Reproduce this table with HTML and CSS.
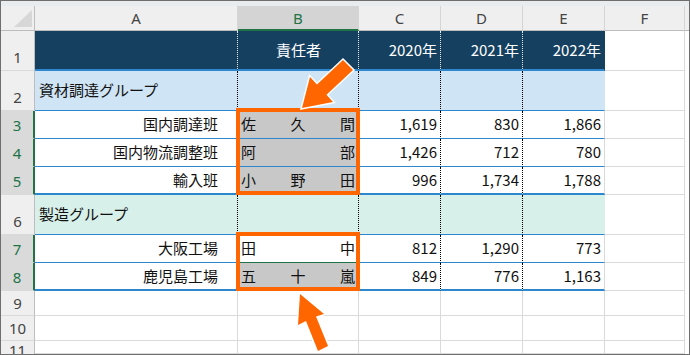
FILE: index.html
```html
<!DOCTYPE html>
<html lang="ja">
<head>
<meta charset="utf-8">
<title>Sheet</title>
<link rel="stylesheet" href="styles.css">
</head>
<body>
<div class="sheet">
  <div class="strip"></div>
  <div class="grid">
    <!-- column headers -->
    <div class="ch corner"><svg class="tri" width="33" height="24" viewBox="0 0 33 24"><polygon points="13,21 31,21 31,4" fill="#d7d7d7"/></svg></div>
    <div class="ch">A</div>
    <div class="ch sel">B</div>
    <div class="ch">C</div>
    <div class="ch">D</div>
    <div class="ch">E</div>
    <div class="ch">F</div>
    <div class="ch pad"></div>

    <!-- row 1 -->
    <div class="rh"><span>1</span></div>
    <div class="c r1"></div>
    <div class="c r1 ctr">責任者</div>
    <div class="c r1 num">2020年</div>
    <div class="c r1 num">2021年</div>
    <div class="c r1 e num">2022年</div>
    <div class="f"></div>
    <div class="pad"></div>

    <!-- row 2 -->
    <div class="rh"><span>2</span></div>
    <div class="c g2">資材調達グループ</div>
    <div class="c g2"></div>
    <div class="c g2"></div>
    <div class="c g2"></div>
    <div class="c g2 e"></div>
    <div class="f"></div>
    <div class="pad"></div>

    <!-- row 3 -->
    <div class="rh sel"><span>3</span></div>
    <div class="c ain">国内調達班</div>
    <div class="c nm gy"><span>佐</span><span>久</span><span>間</span></div>
    <div class="c num">1,619</div>
    <div class="c num">830</div>
    <div class="c num e">1,866</div>
    <div class="f"></div>
    <div class="pad"></div>

    <!-- row 4 -->
    <div class="rh sel"><span>4</span></div>
    <div class="c ain">国内物流調整班</div>
    <div class="c nm gy"><span>阿</span><span>部</span></div>
    <div class="c num">1,426</div>
    <div class="c num">712</div>
    <div class="c num e">780</div>
    <div class="f"></div>
    <div class="pad"></div>

    <!-- row 5 -->
    <div class="rh sel"><span>5</span></div>
    <div class="c ain thick">輸入班</div>
    <div class="c nm gy thick"><span>小</span><span>野</span><span>田</span></div>
    <div class="c num thick">996</div>
    <div class="c num thick">1,734</div>
    <div class="c num e thick">1,788</div>
    <div class="f"></div>
    <div class="pad"></div>

    <!-- row 6 -->
    <div class="rh"><span>6</span></div>
    <div class="c g6">製造グループ</div>
    <div class="c g6"></div>
    <div class="c g6"></div>
    <div class="c g6"></div>
    <div class="c g6 e"></div>
    <div class="f"></div>
    <div class="pad"></div>

    <!-- row 7 -->
    <div class="rh sel"><span>7</span></div>
    <div class="c ain">大阪工場</div>
    <div class="c nm act"><span>田</span><span>中</span></div>
    <div class="c num">812</div>
    <div class="c num">1,290</div>
    <div class="c num e">773</div>
    <div class="f"></div>
    <div class="pad"></div>

    <!-- row 8 -->
    <div class="rh sel"><span>8</span></div>
    <div class="c ain thick">鹿児島工場</div>
    <div class="c nm gy thick"><span>五</span><span>十</span><span>嵐</span></div>
    <div class="c num thick">849</div>
    <div class="c num thick">776</div>
    <div class="c num e thick">1,163</div>
    <div class="f"></div>
    <div class="pad"></div>

    <!-- row 9 -->
    <div class="rh mid"><span>9</span></div>
    <div class="f"></div>
    <div class="f"></div>
    <div class="f"></div>
    <div class="f"></div>
    <div class="f"></div>
    <div class="f"></div>
    <div class="pad"></div>

    <!-- row 10 -->
    <div class="rh mid"><span>10</span></div>
    <div class="f"></div>
    <div class="f"></div>
    <div class="f"></div>
    <div class="f"></div>
    <div class="f"></div>
    <div class="f"></div>
    <div class="pad"></div>

    <!-- row 11 -->
    <div class="rh last"><span>11</span></div>
    <div class="f"></div>
    <div class="f"></div>
    <div class="f"></div>
    <div class="f"></div>
    <div class="f"></div>
    <div class="f"></div>
    <div class="pad"></div>
  </div>

  <div class="hl hl1"></div>
  <div class="hl hl2"></div>

  <svg class="arrows" width="688" height="353" viewBox="1 1 688 353">
    <polygon class="arr" points="302,108 310,77 317,84.5 343,60 353,70 326.5,94.7 333,102"/>
    <polygon class="arr" points="300,294 298,325 306,321 318,351 328,346 316,316.6 324,314"/>
  </svg>
</div>
</body>
</html>
```

FILE: styles.css
```css
html, body {
  margin: 0;
  padding: 0;
  background: #fff;
}

.sheet {
  position: relative;
  width: 690px;
  height: 355px;
  box-sizing: border-box;
  border: 1px solid #6e6e6e;
  overflow: hidden;
  background: #fff;
  font-family: "Noto Sans CJK JP", "Noto Sans", sans-serif;
}

.strip {
  height: 5px;
  background: #e9ecef;
}

.grid {
  display: grid;
  grid-template-columns: 34px 203px 121px 82px 82px 82px 80px 4px;
  grid-template-rows: 25px 40px 40px 28px 28px 28px 40px 28px 28px 25px 25px 13px;
}

.grid > div {
  box-sizing: border-box;
  min-width: 0;
}

/* column headers */
.ch {
  background: #efefef;
  border-right: 1px solid #d5d5d5;
  border-bottom: 1px solid #bcbcbc;
  display: flex;
  align-items: center;
  justify-content: center;
  font-family: "Noto Sans", sans-serif;
  font-size: 15px;
  color: #444;
}
.ch.sel {
  background: #d4d4d4;
  border-bottom: 2px solid #217346;
  color: #217346;
}
.ch.pad {
  border-right: none;
}
.corner {
  position: relative;
  border-right-color: #bdbdbd;
}
.tri {
  position: absolute;
  left: 0;
  top: 0;
}

/* row headers */
.rh {
  background: #efefef;
  border-right: 1px solid #bdbdbd;
  border-bottom: 1px solid #dadada;
  display: flex;
  flex-direction: column;
  justify-content: flex-end;
  align-items: center;
  padding-bottom: 3px;
  font-family: "Noto Sans", sans-serif;
  font-size: 15px;
  color: #444;
}
.rh span {
  display: block;
  line-height: 20px;
  color: #444;
}
.rh.sel {
  background: #dadada;
  border-right: 2px solid #217346;
}
.rh.sel span {
  color: #217346;
}
.rh.mid {
  justify-content: center;
  padding-bottom: 1px;
}
.rh.last {
  justify-content: flex-start;
  padding-bottom: 0;
  border-bottom: none;
}
.rh.last span {
  line-height: 19px;
}

/* data cells */
.c {
  display: flex;
  align-items: center;
  padding: 0 3px 2px 4px;
  font-size: 15px;
  color: #111;
  white-space: nowrap;
  border-right: 1px dotted #000;
  border-bottom: 1px solid #2d87cf;
}
.c.e {
  border-right: 1px solid #d9d9d9;
}
.r1 {
  background: #15405f;
  color: #fff;
  border-bottom-width: 2px;
  border-right-color: #e8e8e8;
}
.r1.e {
  border-right-color: #15405f;
}
.g2 {
  background: #cfe4f5;
}
.g2.e {
  border-right-color: #cfe4f5;
}
.g6 {
  background: #d8f0ea;
}
.g6.e {
  border-right-color: #d8f0ea;
}
.thick {
  border-bottom-width: 2px;
}
.num {
  justify-content: flex-end;
}
.ctr {
  justify-content: center;
}
.ain {
  justify-content: flex-end;
  padding-right: 19px;
}
.nm {
  justify-content: space-between;
  padding: 0 3px 2px 3px;
}
.gy {
  background: #c8c8c8;
}
.act {
  border-bottom-color: #217346;
}

/* empty grid cells */
.f {
  border-right: 1px solid #dadada;
  border-bottom: 1px solid #dadada;
}

/* highlight overlays */
.hl {
  position: absolute;
  box-sizing: border-box;
  border: 4px solid #ff6600;
  left: 235px;
  width: 124px;
}
.hl1 {
  top: 107px;
  height: 87px;
}
.hl2 {
  top: 231px;
  height: 59px;
}

.arrows {
  position: absolute;
  left: 0;
  top: 0;
}
.arr {
  fill: #ff6600;
  stroke: #fff;
  stroke-width: 3;
  stroke-linejoin: miter;
  paint-order: stroke fill;
}
```
